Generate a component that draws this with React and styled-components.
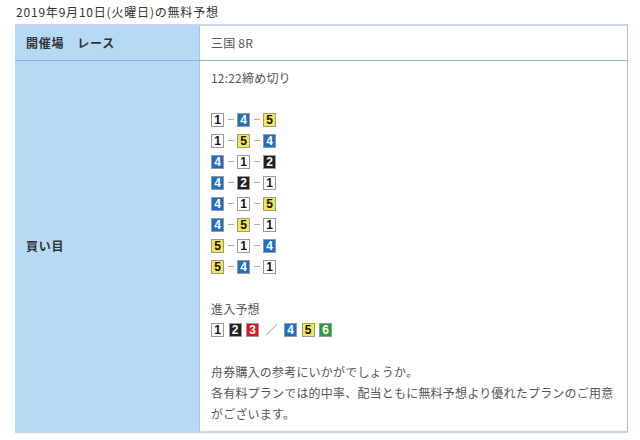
import React from "react";
import styled, { createGlobalStyle } from "styled-components";

const GlobalStyle = createGlobalStyle`
  html, body {
    margin: 0;
    padding: 0;
    background: #fff;
  }
  body {
    font-family: "Noto Sans CJK JP", "Noto Sans", sans-serif;
    color: #444;
  }
`;

const Page = styled.div`
  width: 640px;
  height: 440px;
  padding: 3px 12px 0 15px;
  box-sizing: border-box;
`;

const Title = styled.div`
  font-size: 12px;
  line-height: 18px;
  height: 21px;
  padding-left: 1px;
  color: #333;
  letter-spacing: 0.8px;
  overflow: hidden;
`;

const Table = styled.div`
  display: grid;
  grid-template-columns: 185px minmax(0, 1fr);
  width: 613px;
  box-sizing: border-box;
  border-top: 2px solid #c4d6f0;
  border-right: 1px solid #a9c1e8;
  border-bottom: 2px solid #c4d6f0;
`;

const Head = styled.div`
  background: #b6daf6;
  border-right: 1px solid #a3c4ea;
  border-bottom: ${(p) => (p.last ? "none" : "1px solid #8fb1e3")};
  padding: 7px 11px;
  font-size: 12px;
  line-height: 20px;
  font-weight: bold;
  color: #333;
  letter-spacing: 0.8px;
  display: flex;
  align-items: center;
`;

const Cell = styled.div`
  border-bottom: ${(p) => (p.last ? "none" : "1px solid #8fb1e3")};
  padding: 6px 11px 7px;
  font-size: 12px;
  line-height: 21px;
  color: #555;
  letter-spacing: 0.2px;
`;

const Line = styled.div`
  height: 21px;
  display: flex;
  align-items: center;
  white-space: nowrap;
`;

const colors = {
  1: { bg: "#fff", fg: "#111" },
  2: { bg: "#222", fg: "#fff" },
  3: { bg: "#e8101c", fg: "#fff" },
  4: { bg: "#1d6ec4", fg: "#fff" },
  5: { bg: "#f3e652", fg: "#111" },
  6: { bg: "#2f9b3b", fg: "#fff" },
};

const Box = styled.span`
  display: inline-flex;
  align-items: center;
  justify-content: center;
  width: 11px;
  height: 12px;
  border: 1px solid #999;
  background: ${(p) => colors[p.n].bg};
  color: ${(p) => colors[p.n].fg};
  font-family: "Liberation Sans", Arial, sans-serif;
  font-weight: bold;
  font-size: 12px;
  line-height: 12px;
  letter-spacing: 0;
`;

const Dash = styled.span`
  display: inline-block;
  width: 6px;
  height: 1px;
  background: #aaa;
  margin: 0 3.5px;
`;

const Entry = styled.div`
  display: flex;
  align-items: center;
  gap: 4.5px;
`;

const Slash = styled.span`
  width: 14px;
  margin: 0 1px;
  color: #888;
  font-size: 12px;
  text-align: center;
`;

const Combo = ({ nums }) => (
  <Line>
    <Box n={nums[0]}>{nums[0]}</Box>
    <Dash />
    <Box n={nums[1]}>{nums[1]}</Box>
    <Dash />
    <Box n={nums[2]}>{nums[2]}</Box>
  </Line>
);

const combos = [
  [1, 4, 5],
  [1, 5, 4],
  [4, 1, 2],
  [4, 2, 1],
  [4, 1, 5],
  [4, 5, 1],
  [5, 1, 4],
  [5, 4, 1],
];

export default function App() {
  return (
    <Page>
      <GlobalStyle />
      <Title>2019年9月10日(火曜日)の無料予想</Title>
      <Table>
        <Head>開催場　レース</Head>
        <Cell>三国 8R</Cell>
        <Head last>買い目</Head>
        <Cell last>
          <Line>12:22締め切り</Line>
          <Line />
          {combos.map((c, i) => (
            <Combo key={i} nums={c} />
          ))}
          <Line />
          <Line>進入予想</Line>
          <Line>
            <Entry>
              <Box n={1}>1</Box>
              <Box n={2}>2</Box>
              <Box n={3}>3</Box>
              <Slash>／</Slash>
              <Box n={4}>4</Box>
              <Box n={5}>5</Box>
              <Box n={6}>6</Box>
            </Entry>
          </Line>
          <Line />
          <Line>舟券購入の参考にいかがでしょうか。</Line>
          <Line>各有料プランでは的中率、配当ともに無料予想より優れたプランのご用意</Line>
          <Line>がございます。</Line>
        </Cell>
      </Table>
    </Page>
  );
}
